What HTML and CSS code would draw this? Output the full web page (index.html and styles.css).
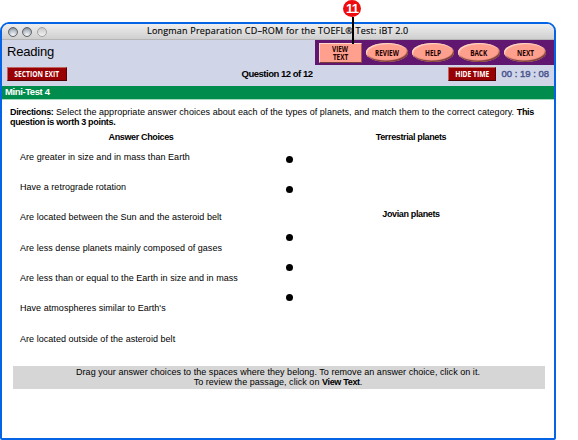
FILE: index.html
```html
<!DOCTYPE html>
<html lang="en">
<head>
<meta charset="utf-8">
<title>Longman Preparation CD-ROM for the TOEFL® Test: iBT 2.0</title>
<link rel="stylesheet" href="styles.css">
</head>
<body>
<div class="window">
  <div class="titlebar">
    <div class="lights"><i class="light"></i><i class="light"></i><i class="light pale"></i></div>
    <div class="title"><span>Longman Preparation CD–ROM for the TOEFL® Test: iBT 2.0</span></div>
  </div>
  <header class="header">
    <div class="top">
      <h1>Reading</h1>
      <nav class="nav">
        <button class="btn view"><span>VIEW</span><span>TEXT</span></button>
        <button class="btn oval"><span>REVIEW</span></button>
        <button class="btn oval"><span>HELP</span></button>
        <button class="btn oval"><span>BACK</span></button>
        <button class="btn oval"><span>NEXT</span></button>
      </nav>
    </div>
    <div class="status">
      <button class="red exit"><span>SECTION EXIT</span></button>
      <b class="question">Question 12 of 12</b>
      <div class="timer"><button class="red hide"><span>HIDE TIME</span></button><span class="time">00 : 19 : 08</span></div>
    </div>
  </header>
  <div class="testbar">Mini-Test 4</div>
  <main>
    <p class="directions"><b>Directions:</b> Select the appropriate answer choices about each of the types of planets, and match them to the correct category. <b>This</b><br><b>question is worth 3 points.</b></p>
    <div class="board">
      <section class="choices">
        <h2>Answer Choices</h2>
        <ul>
          <li>Are greater in size and in mass than Earth</li>
          <li>Have a retrograde rotation</li>
          <li>Are located between the Sun and the asteroid belt</li>
          <li>Are less dense planets mainly composed of gases</li>
          <li>Are less than or equal to the Earth in size and in mass</li>
          <li>Have atmospheres similar to Earth's</li>
          <li>Are located outside of the asteroid belt</li>
        </ul>
      </section>
      <section class="targets">
        <div class="group first">
          <h2>Terrestrial planets</h2>
          <i class="dot"></i><i class="dot"></i>
        </div>
        <div class="group">
          <h2>Jovian planets</h2>
          <i class="dot"></i><i class="dot"></i><i class="dot"></i>
        </div>
      </section>
    </div>
    <p class="hint">Drag your answer choices to the spaces where they belong. To remove an answer choice, click on it.<br>To review the passage, click on <b>View Text</b>.</p>
  </main>
</div>
<div class="callout"><span>11</span></div>
</body>
</html>
```

FILE: styles.css
```css
* { box-sizing: border-box; margin: 0; padding: 0; }
body {
  width: 578px;
  height: 440px;
  padding-top: 22px;
  overflow: hidden;
  background: #fff;
  color: #000;
  font: 9px/10.4px "Liberation Sans", Arial, sans-serif;
  letter-spacing: 0.04px;
}
b { letter-spacing: -0.32px; }
button { border: 0; font: inherit; color: inherit; display: flex; align-items: center; justify-content: center; }
.window {
  width: 556px;
  height: 418px;
  border: 2px solid #0564e6;
  border-radius: 9px 9px 2px 2px;
  overflow: hidden;
}
.titlebar {
  height: 16px;
  display: flex;
  align-items: center;
  background: linear-gradient(#eeeeee, #cfcfcf);
  border-bottom: 1px solid #b5b5b5;
}
.lights { display: flex; gap: 4.5px; width: 60px; padding-left: 5.5px; }
.light {
  width: 10px;
  height: 10px;
  border-radius: 50%;
  border: 1px solid #60646a;
  background: radial-gradient(circle at 50% 85%, #f4f7fb 0, #b8bfc8 55%, #707780 100%);
}
.light.pale { border-color: #a2a2a2; background: linear-gradient(#c8c8c8, #f2f2f2); }
.title {
  flex: 1;
  padding-left: 85px;
  white-space: nowrap;
  font-family: "Open Sans", "Noto Sans", sans-serif;
  font-size: 9px;
  letter-spacing: 0.2px;
  -webkit-text-stroke: 0.15px #111;
}
.header { height: 46px; background: #d0d5e8; }
.top { display: flex; justify-content: space-between; height: 25px; }
h1 { font-size: 13px; line-height: 24px; font-weight: 400; padding-left: 5px; letter-spacing: -0.2px; }
.nav {
  width: 239px;
  height: 25px;
  background: #611670;
  display: flex;
  align-items: center;
  gap: 4px;
  padding-left: 4px;
}
.btn {
  background: #ff9f8e;
  color: #200;
  font: 700 8px/8px "Open Sans", sans-serif;
  letter-spacing: 0;
}
.btn span { transform: scaleX(0.8); }
.btn.view {
  flex-direction: column;
  width: 43px;
  height: 20px;
  border: 1px solid;
  border-color: #ffd8cb #a05a50 #7a3a38 #ffd8cb;
}
.btn.oval {
  width: 42px;
  height: 19px;
  border-radius: 50%;
  box-shadow: inset 1px 1px 1px #ffdccb, inset -1px -1.5px 1px #7a4038;
}
.status { display: flex; align-items: center; height: 21px; padding-bottom: 3px; }
.red {
  height: 14px;
  background: #980003;
  color: #fff;
  border: 1px solid;
  border-color: #c0645f #5c0002 #4c0002 #c0645f;
  font: 700 8px/10px "Open Sans", sans-serif;
  letter-spacing: 0;
  white-space: nowrap;
}
.red span { transform: scaleX(0.84); }
.exit { width: 60px; margin-left: 5px; }
.question { margin-left: 174.5px; font-size: 9.5px; letter-spacing: -0.48px; }
.timer { margin-left: auto; display: flex; align-items: center; gap: 5px; padding-right: 5px; }
.hide { width: 48px; }
.time { font-size: 9.5px; letter-spacing: 0; color: #4b568f; white-space: nowrap; -webkit-text-stroke: 0.45px #4b568f; }
.testbar {
  height: 14px;
  background: #008c4c;
  border-bottom: 1px solid #a4d9bb;
  color: #fff;
  font-weight: 700;
  font-size: 9.5px;
  line-height: 12px;
  letter-spacing: -0.4px;
  padding-left: 3px;
}
main { padding: 7px 9px 0 8px; }
.directions { white-space: nowrap; }
.board { display: grid; grid-template-columns: 275px 1fr; margin-top: 4px; height: 226px; }
h2 { font-size: 9px; line-height: 11px; font-weight: 700; text-align: center; letter-spacing: -0.36px; }
ul { list-style: none; padding: 4px 0 0 10px; }
li { height: 30.33px; line-height: 20px; white-space: nowrap; }
.choices h2 { width: 262px; }
.targets h2 { width: 252px; }
.group { display: flex; flex-direction: column; gap: 23.3px; }
.group.first { height: 77.5px; }
.group h2 { margin-bottom: -10px; }
.dot { width: 7px; height: 7px; border-radius: 50%; background: #000; margin-left: 0.5px; }
.hint {
  height: 23px;
  margin: 8px 0 0 3px;
  padding: 1px 2px 0 0;
  background: #d6d6d6;
  text-align: center;
  white-space: nowrap;
}
.callout {
  position: absolute;
  left: 343px;
  top: 0;
  width: 18px;
  height: 17px;
  border-radius: 50%;
  background: #ed0c10;
  color: #fff;
  font: 700 13px/17px "Liberation Sans", Arial, sans-serif;
  letter-spacing: -0.8px;
  text-align: center;
}
.callout::after { content: ""; position: absolute; left: 9px; top: 17px; width: 2px; height: 27px; background: #000; }
```
